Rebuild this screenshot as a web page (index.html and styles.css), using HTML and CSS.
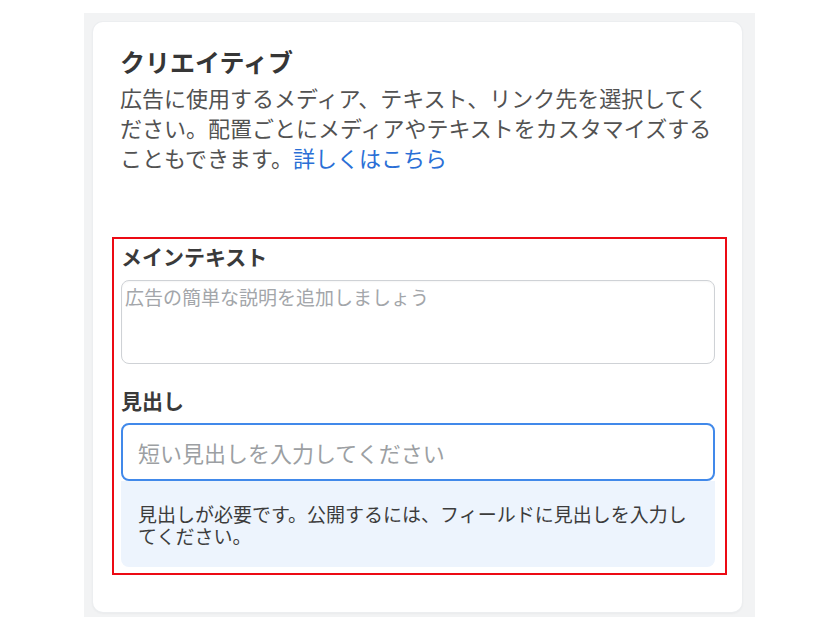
FILE: index.html
```html
<!DOCTYPE html>
<html lang="ja">
<head>
<meta charset="utf-8">
<title>クリエイティブ</title>
<link rel="stylesheet" href="styles.css">
</head>
<body>
<div class="panel">
  <div class="card">
    <div class="intro">
      <h2 class="title">クリエイティブ</h2>
      <p class="desc"><span>広告に使用するメディア、テキスト、リンク先を選択してください。配置ごとにメディアやテキストをカスタマイズすることもできます。</span><a class="link" href="#">詳しくはこちら</a></p>
    </div>
    <div class="highlight">
      <label class="label">メインテキスト</label>
      <div class="textarea"><span class="ph-small">広告の簡単な説明を追加しましょう</span></div>
      <label class="label label-second">見出し</label>
      <div class="input"><span class="ph-large">短い見出しを入力してください</span></div>
      <div class="helper">見出しが必要です。公開するには、フィールドに見出しを入力してください。</div>
    </div>
  </div>
</div>
</body>
</html>
```

FILE: styles.css
```css
html, body {
  margin: 0;
  padding: 0;
  background: #ffffff;
}

body {
  font-family: "Noto Sans CJK JP", "Noto Sans", sans-serif;
  color: #333333;
}

.panel {
  margin: 13px 0 0 84px;
  width: 671px;
  height: 604px;
  box-sizing: border-box;
  background: #f2f3f4;
  padding: 9px 13px 5px 9px;
}

.card {
  height: 100%;
  box-sizing: border-box;
  background: #ffffff;
  border-radius: 10px;
  box-shadow: 0 0 0 1px #eceef0, 0 1px 3px rgba(0, 0, 0, 0.07);
  padding: 23px 15px 0 19px;
}

.intro {
  padding-left: 8px;
}

.title {
  margin: 0;
  font-size: 25px;
  line-height: 32px;
  font-weight: 700;
  color: #363636;
}

.desc {
  margin: 5px 0 0 0;
  font-size: 22px;
  line-height: 30px;
  color: #525252;
}

.link {
  color: #2a6fd6;
  text-decoration: none;
}

.highlight {
  margin-top: 65px;
  border: 2px solid #ec0a14;
  padding: 4px 10px 6px 7px;
}

.label {
  display: block;
  font-size: 21px;
  line-height: 26px;
  font-weight: 700;
  color: #3a3a3a;
}

.label-second {
  margin-top: 23px;
}

.textarea {
  margin-top: 11px;
  height: 84px;
  box-sizing: border-box;
  border: 1px solid #cfd2d6;
  border-radius: 8px;
  padding: 4px 3px;
  box-shadow: inset 0 1px 2px rgba(0, 0, 0, 0.04);
}

.ph-small {
  font-size: 19px;
  line-height: 24px;
  color: #a3a6aa;
}

.input {
  margin-top: 10px;
  height: 58px;
  box-sizing: border-box;
  border: 2px solid #4189ea;
  border-radius: 8px;
  padding: 0 15px;
  display: flex;
  align-items: center;
}

.ph-large {
  font-size: 22px;
  line-height: 30px;
  color: #9c9fa3;
}

.helper {
  background: #edf4fd;
  border-radius: 0 0 8px 8px;
  padding: 22px 20px 20px 17px;
  font-size: 19px;
  line-height: 22px;
  color: #3c3c3c;
}
```
